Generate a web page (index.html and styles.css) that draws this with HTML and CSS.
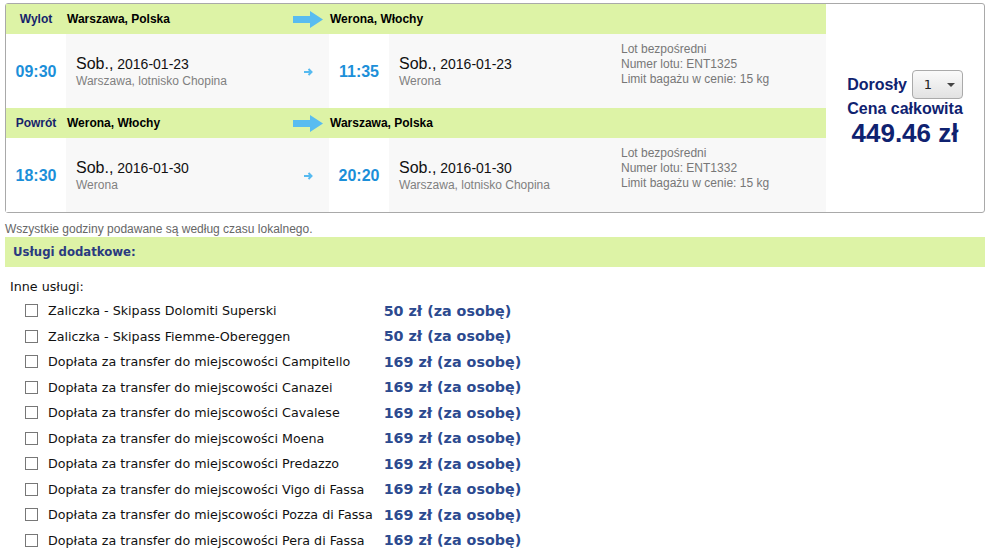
FILE: index.html
```html
<!DOCTYPE html>
<html lang="pl">
<head>
    <meta charset="UTF-8">
    <title>Rezerwacja - Werona</title>
    <link rel="stylesheet" href="styles.css">
</head>
<body>
    <div class="page">
        <div class="trip">
            <div class="legs">
                <div class="leg-head">
                    <div class="leg-label">Wylot</div>
                    <div class="leg-city">
                        <span>Warszawa, Polska</span>
                        <svg class="big-arrow" width="30" height="18" viewBox="0 0 30 18"><polygon points="0,5 17,5 17,0 30,8.5 17,17 17,12 0,12"/></svg>
                    </div>
                    <div class="leg-city">Werona, Włochy</div>
                </div>
                <div class="leg-row">
                    <div class="time">09:30</div>
                    <div class="place">
                        <div>
                            <div class="date"><span class="day">Sob.,</span> 2016-01-23</div>
                            <div class="airport">Warszawa, lotnisko Chopina</div>
                        </div>
                        <svg class="small-arrow" width="9" height="8" viewBox="0 0 9 8"><path d="M0 4H7.5M4.5 1L7.5 4L4.5 7"/></svg>
                    </div>
                    <div class="time">11:35</div>
                    <div class="place place-to">
                        <div class="date"><span class="day">Sob.,</span> 2016-01-23</div>
                        <div class="airport">Werona</div>
                    </div>
                    <div class="info">
                        <div>Lot bezpośredni</div>
                        <div>Numer lotu: ENT1325</div>
                        <div>Limit bagażu w cenie: 15 kg</div>
                    </div>
                </div>
                <div class="leg-head">
                    <div class="leg-label">Powrót</div>
                    <div class="leg-city">
                        <span>Werona, Włochy</span>
                        <svg class="big-arrow" width="30" height="18" viewBox="0 0 30 18"><polygon points="0,5 17,5 17,0 30,8.5 17,17 17,12 0,12"/></svg>
                    </div>
                    <div class="leg-city">Warszawa, Polska</div>
                </div>
                <div class="leg-row">
                    <div class="time">18:30</div>
                    <div class="place">
                        <div>
                            <div class="date"><span class="day">Sob.,</span> 2016-01-30</div>
                            <div class="airport">Werona</div>
                        </div>
                        <svg class="small-arrow" width="9" height="8" viewBox="0 0 9 8"><path d="M0 4H7.5M4.5 1L7.5 4L4.5 7"/></svg>
                    </div>
                    <div class="time">20:20</div>
                    <div class="place place-to">
                        <div class="date"><span class="day">Sob.,</span> 2016-01-30</div>
                        <div class="airport">Warszawa, lotnisko Chopina</div>
                    </div>
                    <div class="info">
                        <div>Lot bezpośredni</div>
                        <div>Numer lotu: ENT1332</div>
                        <div>Limit bagażu w cenie: 15 kg</div>
                    </div>
                </div>
            </div>
            <div class="price">
                <div class="pax">
                    <span>Dorosły</span>
                    <div class="select">
                        <span>1</span>
                        <span class="caret"></span>
                    </div>
                </div>
                <div class="total-label">Cena całkowita</div>
                <div class="total">449.46 zł</div>
            </div>
        </div>

        <p class="note">Wszystkie godziny podawane są według czasu lokalnego.</p>

        <div class="extras-head">Usługi dodatkowe:</div>
        <div class="extras">
            <div class="extras-title">Inne usługi:</div>
            <div class="extras-list">
                <input type="checkbox"><span>Zaliczka - Skipass Dolomiti Superski</span><b>50 zł (za osobę)</b>
                <input type="checkbox"><span>Zaliczka - Skipass Fiemme-Obereggen</span><b>50 zł (za osobę)</b>
                <input type="checkbox"><span>Dopłata za transfer do miejscowości Campitello</span><b>169 zł (za osobę)</b>
                <input type="checkbox"><span>Dopłata za transfer do miejscowości Canazei</span><b>169 zł (za osobę)</b>
                <input type="checkbox"><span>Dopłata za transfer do miejscowości Cavalese</span><b>169 zł (za osobę)</b>
                <input type="checkbox"><span>Dopłata za transfer do miejscowości Moena</span><b>169 zł (za osobę)</b>
                <input type="checkbox"><span>Dopłata za transfer do miejscowości Predazzo</span><b>169 zł (za osobę)</b>
                <input type="checkbox"><span>Dopłata za transfer do miejscowości Vigo di Fassa</span><b>169 zł (za osobę)</b>
                <input type="checkbox"><span>Dopłata za transfer do miejscowości Pozza di Fassa</span><b>169 zł (za osobę)</b>
                <input type="checkbox"><span>Dopłata za transfer do miejscowości Pera di Fassa</span><b>169 zł (za osobę)</b>
            </div>
        </div>
    </div>
</body>
</html>
```

FILE: styles.css
```css
body {
    margin: 0;
    font-family: "Liberation Sans", Arial, sans-serif;
    background: #fff;
    color: #000;
}
.page {
    padding: 3px 3px 0 5px;
    width: 980px;
}
.trip {
    display: flex;
    border: 1px solid #a9a9a9;
    border-radius: 3px;
    height: 208px;
}
.legs {
    width: 820px;
}
.leg-head {
    display: grid;
    grid-template-columns: 60px 263px 1fr;
    align-items: center;
    height: 30px;
    background: #ddf3a6;
    font-size: 12px;
    font-weight: bold;
}
.leg-label {
    text-align: center;
    color: #16236b;
}
.leg-city {
    display: flex;
    align-items: center;
    justify-content: space-between;
    padding: 0 6px 0 1px;
}
.big-arrow {
    fill: #58bcf0;
    margin-top: 1px;
}
.leg-row {
    display: grid;
    grid-template-columns: 60px 263px 60px 222px 215px;
    height: 74px;
    background: #f8f8f8;
}
.time {
    display: flex;
    align-items: center;
    justify-content: center;
    background: #fff;
    color: #1c8fd9;
    font-size: 16px;
    font-weight: bold;
    padding-top: 1px;
}
.place {
    display: flex;
    align-items: center;
    justify-content: space-between;
    padding: 2px 16px 0 10px;
}
.place-to {
    flex-direction: column;
    align-items: flex-start;
    justify-content: center;
}
.date {
    font-size: 14px;
    line-height: 17px;
    color: #111;
}
.day {
    font-size: 16px;
}
.airport {
    font-size: 12px;
    line-height: 16px;
    color: #808080;
}
.small-arrow {
    fill: none;
    stroke: #56baf0;
    stroke-width: 2;
}
.info {
    padding: 8px 0 0 10px;
    font-size: 12px;
    line-height: 15px;
    color: #777;
}
.price {
    flex: 1;
    display: flex;
    flex-direction: column;
    align-items: center;
    justify-content: center;
    color: #0f2270;
    font-weight: bold;
    padding-top: 2px;
}
.pax {
    display: flex;
    align-items: center;
    gap: 5px;
    font-size: 16px;
}
.select {
    display: flex;
    align-items: center;
    justify-content: space-between;
    width: 31px;
    height: 27px;
    padding: 0 7px 0 11px;
    border: 1px solid #aaa;
    border-radius: 4px;
    background: linear-gradient(#fafafa, #e2e2e2);
    color: #222;
    font-size: 13px;
    font-weight: normal;
    font-family: "DejaVu Sans", Verdana, sans-serif;
}
.caret {
    width: 0;
    height: 0;
    border-left: 4px solid transparent;
    border-right: 4px solid transparent;
    border-top: 4px solid #444;
}
.total-label {
    font-size: 16px;
    margin-top: 1px;
}
.total {
    font-size: 26px;
    line-height: 30px;
}
.note {
    margin: 9px 0 0 0;
    font-size: 12px;
    line-height: 14px;
    color: #666;
}
.extras-head {
    margin-top: 1px;
    height: 30px;
    line-height: 30px;
    padding-left: 8px;
    background: #ddf3a6;
    color: #2a3a80;
    font-family: "DejaVu Sans Condensed", "DejaVu Sans", sans-serif;
    font-size: 13px;
    font-weight: bold;
}
.extras {
    font-family: "DejaVu Sans", Verdana, sans-serif;
    font-size: 12.7px;
    color: #111;
    padding: 12px 0 0 5px;
}
.extras-title {
    line-height: 16px;
}
.extras-list {
    display: grid;
    grid-template-columns: 13px max-content max-content;
    grid-auto-rows: 25.5px;
    column-gap: 10px;
    align-items: center;
    margin: 3px 0 0 15px;
}
.extras-list input {
    appearance: none;
    width: 13px;
    height: 13px;
    margin: 0;
    border: 1px solid #777;
    background: #fff;
}
.extras-list b {
    margin-left: 1px;
    font-size: 14.3px;
    color: #2c4a8f;
}
```
